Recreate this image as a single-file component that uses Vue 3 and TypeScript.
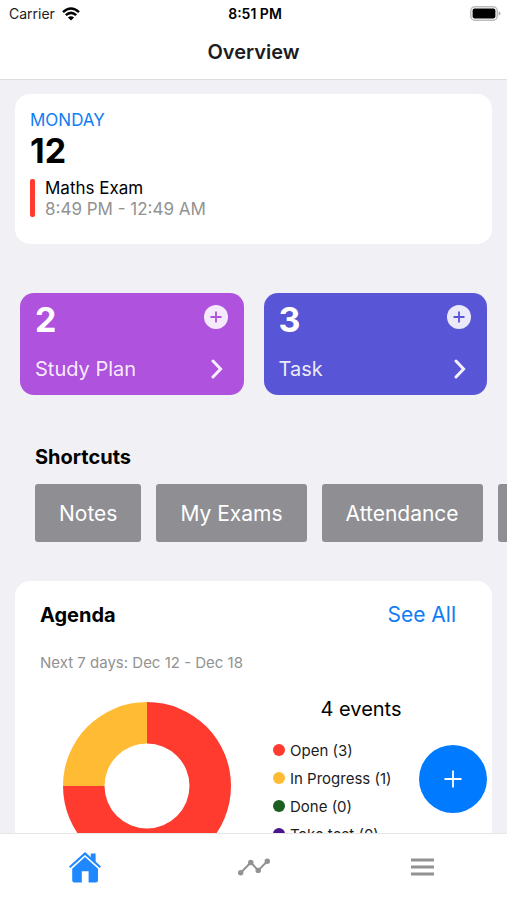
<script setup lang="ts">
interface Tile {
  count: number
  label: string
  tone: string
}

interface Status {
  label: string
  count: number
  color: string
}

const tiles: Tile[] = [
  { count: 2, label: 'Study Plan', tone: 'purple' },
  { count: 3, label: 'Task', tone: 'indigo' },
]

const shortcuts: string[] = ['Notes', 'My Exams', 'Attendance', 'Subjects']

const statuses: Status[] = [
  { label: 'Open', count: 3, color: '#ff3b30' },
  { label: 'In Progress', count: 1, color: '#ffbb33' },
  { label: 'Done', count: 0, color: '#1b5e20' },
  { label: 'Take test', count: 0, color: '#4a148c' },
]
</script>

<template>
  <div class="app">
    <header class="header">
      <div class="status">
        <span class="carrier">
          Carrier
          <svg class="wifi" viewBox="0 0 18 14" aria-hidden="true">
            <path d="M1 5.1Q9-2.1 17 5.1" />
            <path d="M3.8 8.1Q9 3.6 14.2 8.1" />
            <path class="solid" d="M9 13.6 5.9 10.4Q9 7.9 12.1 10.4Z" />
          </svg>
        </span>
        <span class="clock">8:51 PM</span>
        <svg class="battery" viewBox="0 0 31 15" aria-hidden="true">
          <rect x="0.8" y="0.8" width="26.4" height="13.4" rx="4" fill="#fff" stroke="#bcbcbc" stroke-width="1.5" />
          <rect x="2.6" y="2.6" width="22.8" height="9.8" rx="1.8" fill="#000" />
          <path d="M28.6 5.2Q30.6 6 30.6 7.5T28.6 9.8Z" fill="#b0b0b0" />
        </svg>
      </div>
      <h1 class="title">Overview</h1>
    </header>

    <main class="content">
      <section class="card today">
        <p class="weekday">MONDAY</p>
        <p class="date">12</p>
        <div class="event">
          <span class="event-bar"></span>
          <div>
            <p class="event-name">Maths Exam</p>
            <p class="event-time">8:49 PM - 12:49 AM</p>
          </div>
        </div>
      </section>

      <section class="tiles">
        <article v-for="tile in tiles" :key="tile.label" class="tile" :class="tile.tone">
          <div class="tile-top">
            <span class="tile-count">{{ tile.count }}</span>
            <button class="tile-add" type="button" :aria-label="`Add ${tile.label}`">
              <svg viewBox="0 0 24 24" aria-hidden="true">
                <path d="M12 6.5v11M6.5 12h11" />
              </svg>
            </button>
          </div>
          <a class="tile-link" href="#">
            {{ tile.label }}
            <svg viewBox="0 0 12 20" aria-hidden="true">
              <path d="M2 2l7.6 8L2 18" />
            </svg>
          </a>
        </article>
      </section>

      <section class="shortcuts">
        <h2 class="heading">Shortcuts</h2>
        <div class="shortcut-row">
          <button v-for="name in shortcuts" :key="name" class="shortcut" type="button">{{ name }}</button>
        </div>
      </section>

      <section class="card agenda">
        <div class="agenda-head">
          <h2 class="heading">Agenda</h2>
          <a class="see-all" href="#">See All</a>
        </div>
        <p class="range">Next 7 days: Dec 12 - Dec 18</p>
        <div class="agenda-body">
          <svg class="donut" viewBox="0 0 170 170" role="img" aria-label="Events by status">
            <path d="M85 0A85 85 0 1 1 0 85H42A43 43 0 1 0 85 42Z" fill="#ff3b30" />
            <path d="M0 85A85 85 0 0 1 85 0V42A43 43 0 0 0 42 85Z" fill="#ffbb33" />
          </svg>
          <div class="summary">
            <p class="total">4 events</p>
            <ul class="legend">
              <li v-for="s in statuses" :key="s.label">
                <span class="dot" :style="{ background: s.color }"></span>
                {{ s.label }} ({{ s.count }})
              </li>
            </ul>
          </div>
        </div>
      </section>
    </main>

    <button class="fab" type="button" aria-label="Add event">
      <svg viewBox="0 0 18 18" aria-hidden="true">
        <path d="M9 0.5v17M0.5 9h17" />
      </svg>
    </button>

    <nav class="tabs">
      <a class="tab" href="#" aria-label="Overview">
        <svg class="home" viewBox="0 0 32 31" aria-hidden="true">
          <path d="M21.8 1.6h4.8v8.6l-4.8-4.6Z" />
          <path d="M16 0 32 14.6 30.7 16.1 16 2.9 1.3 16.1 0 14.6Z" />
          <path d="M16 5 29 16.7V28.6Q29 30.4 27.2 30.4H19.6V19.2H12.8V30.4H5Q3.2 30.4 3.2 28.6V16.7Z" />
        </svg>
      </a>
      <a class="tab" href="#" aria-label="Statistics">
        <svg class="trend" viewBox="0 0 32 18" aria-hidden="true">
          <path d="M2.7 14.8 12.8 4.5 20.2 12.4 29.3 3.2" />
          <circle cx="2.7" cy="14.8" r="2.7" />
          <circle cx="12.8" cy="4.5" r="2.7" />
          <circle cx="20.2" cy="12.4" r="2.7" />
          <circle cx="29.3" cy="3.2" r="2.7" />
        </svg>
      </a>
      <a class="tab" href="#" aria-label="Menu">
        <svg class="menu" viewBox="0 0 23 18" aria-hidden="true">
          <path d="M0 2h23M0 9h23M0 16h23" />
        </svg>
      </a>
    </nav>
  </div>
</template>

<style>
body {
  margin: 0;
  background: #f1f0f5;
}
</style>

<style scoped>
.app {
  position: relative;
  display: flex;
  flex-direction: column;
  height: 100vh;
  background: #f1f0f5;
  color: #000;
  font-family: Inter, "Liberation Sans", sans-serif;
  font-size: 15px;
}

.app * {
  box-sizing: border-box;
}

p,
h1,
h2,
ul {
  margin: 0;
  padding: 0;
}

a {
  color: inherit;
  text-decoration: none;
}

button {
  border: 0;
  padding: 0;
  font: inherit;
  color: inherit;
  cursor: pointer;
}

svg {
  display: block;
  flex: none;
}

.header {
  flex: none;
  background: #fff;
  border-bottom: 1px solid #dedee0;
}

.status {
  display: grid;
  grid-template-columns: 1fr auto 1fr;
  align-items: center;
  height: 27px;
  padding: 0 6px 0 9px;
  font-size: 14px;
}

.carrier {
  display: flex;
  align-items: center;
  gap: 7px;
  color: #1c1c1e;
}

.wifi {
  width: 18px;
  height: 14px;
  fill: none;
  stroke: #000;
  stroke-width: 2.5;
}

.wifi .solid {
  fill: #000;
  stroke: none;
}

.clock {
  font-weight: 600;
}

.battery {
  justify-self: end;
  width: 31px;
  height: 15px;
}

.title {
  height: 52px;
  line-height: 50px;
  text-align: center;
  font-size: 20px;
  font-weight: 600;
  color: #1c1c1e;
}

.content {
  flex: 1;
  min-height: 0;
  overflow-y: auto;
  scrollbar-width: none;
  padding: 14px 15px 0;
}

.card {
  background: #fff;
  border-radius: 15px;
}

.today {
  padding: 16px 15px 24px;
}

.weekday {
  font-size: 17px;
  line-height: 20px;
  color: #117df5;
}

.date {
  margin-bottom: 6px;
  font-size: 34px;
  line-height: 42px;
  font-weight: 700;
}

.event {
  display: flex;
  gap: 10px;
}

.event-bar {
  width: 5px;
  margin: 1px 0 3px;
  border-radius: 2px;
  background: #ff3b30;
}

.event-name,
.event-time {
  font-size: 17px;
  line-height: 21px;
}

.event-time {
  color: #929292;
}

.tiles {
  display: grid;
  grid-template-columns: 1fr 1fr;
  gap: 20px;
  margin-top: 49px;
  padding: 0 5px;
}

.tile {
  padding: 12px 16px 14px 15px;
  border-radius: 14px;
  color: #fff;
}

.purple {
  background: #af52de;
}

.indigo {
  background: #5856d6;
}

.tile-top {
  display: flex;
  justify-content: space-between;
  align-items: flex-start;
}

.tile-count {
  font-size: 34px;
  line-height: 30px;
  font-weight: 700;
}

.tile-add {
  width: 24px;
  height: 24px;
  border-radius: 50%;
  background: rgba(255, 255, 255, 0.88);
}

.tile-add svg {
  width: 24px;
  height: 24px;
  stroke-width: 1.8;
}

.purple .tile-add svg {
  stroke: #af52de;
}

.indigo .tile-add svg {
  stroke: #5856d6;
}

.tile-link {
  display: flex;
  justify-content: space-between;
  align-items: center;
  margin-top: 22px;
  padding-right: 5px;
  font-size: 20px;
  line-height: 24px;
  color: rgba(255, 255, 255, 0.9);
}

.tile-link svg {
  width: 12px;
  height: 20px;
  fill: none;
  stroke: #f4effb;
  stroke-width: 3;
  stroke-linecap: round;
}

.shortcuts {
  margin: 50px -15px 0 20px;
}

.heading {
  font-size: 20px;
  line-height: 24px;
  font-weight: 700;
}

.shortcut-row {
  display: flex;
  gap: 15px;
  margin-top: 15px;
  overflow-x: auto;
  scrollbar-width: none;
}

.shortcut {
  flex: none;
  height: 58px;
  padding: 0 24px;
  border-radius: 3px;
  background: #8e8e93;
  color: #fff;
  font-size: 21px;
}

.agenda {
  margin-top: 39px;
  padding: 22px 25px 40px;
}

.agenda-head {
  display: flex;
  justify-content: space-between;
  align-items: center;
  padding-right: 11px;
}

.see-all {
  font-size: 21px;
  line-height: 24px;
  color: #117df5;
}

.range {
  margin-top: 26px;
  line-height: 20px;
  color: #929292;
}

.agenda-body {
  display: flex;
  gap: 42px;
  margin-top: 24px;
  padding-left: 23px;
}

.donut {
  width: 168px;
  height: 168px;
  margin-top: 5px;
}

.total {
  width: 176px;
  line-height: 24px;
  font-size: 20px;
  text-align: center;
}

.legend {
  margin-top: 15px;
  list-style: none;
}

.legend li {
  display: flex;
  align-items: center;
  gap: 5px;
  height: 28px;
  white-space: nowrap;
  color: #1c1c1e;
}

.dot {
  width: 12px;
  height: 12px;
  border-radius: 50%;
}

.fab {
  position: absolute;
  right: 20px;
  bottom: 87px;
  display: grid;
  place-items: center;
  width: 68px;
  height: 68px;
  border-radius: 50%;
  background: #007aff;
}

.fab svg {
  width: 18px;
  height: 18px;
  stroke: #fff;
  stroke-width: 1.8;
}

.tabs {
  display: grid;
  grid-template-columns: repeat(3, 1fr);
  flex: none;
  height: 67px;
  background: #fff;
  border-top: 1px solid #e6e6e8;
}

.tab {
  display: grid;
  place-items: center;
}

.home {
  width: 32px;
  height: 31px;
  fill: #1f88ff;
}

.trend {
  width: 32px;
  height: 18px;
  fill: #929292;
}

.trend path {
  fill: none;
  stroke: #929292;
  stroke-width: 2;
}

.menu {
  width: 23px;
  height: 18px;
  stroke: #929292;
  stroke-width: 3;
}
</style>
